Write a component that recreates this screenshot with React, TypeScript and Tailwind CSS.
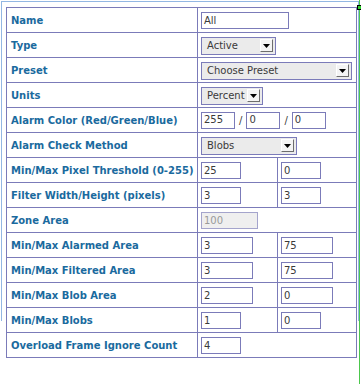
import type { ReactNode } from "react";

/* zone settings form — fixed-width table, old-school inputs */

const font = "font-['DejaVu_Sans',Verdana,sans-serif]";

function Box({ value, w, disabled }: { value: string; w: string; disabled?: boolean }) {
  return (
    <span
      className={`inline-flex items-center h-[17px] px-[2px] border align-middle text-[10px] leading-none ${w} ${
        disabled
          ? "border-[#a4a4cc] bg-[#efefef] text-[#9a9a9a]"
          : "border-[#7b7bb9] bg-white text-[#3a3a3a]"
      }`}
    >
      {value}
    </span>
  );
}

function Select({ value, w }: { value: string; w: string }) {
  return (
    <span
      className={`inline-flex items-center justify-between h-[18px] pl-[5px] pr-[2px] border border-[#7b7bb9] bg-[#ebebeb] align-middle text-[10px] leading-none text-[#3a3a3a] ${w}`}
    >
      <span>{value}</span>
      <span className="flex items-center justify-center w-[13px] h-[13px] bg-[#f4f4f4] border-r border-b border-[#6d6d6d] border-l border-t border-l-white border-t-white">
        <svg width="7" height="4" viewBox="0 0 7 4">
          <path d="M0 0h7L3.5 4z" fill="#000" />
        </svg>
      </span>
    </span>
  );
}

function Row({ label, children }: { label: string; children: ReactNode }) {
  return (
    <tr>
      <td className="h-[25px] border border-[#7b7bb9] px-[4px] py-0 text-[10px] font-bold text-[#1a6a9e] whitespace-nowrap">
        {label}
      </td>
      {children}
    </tr>
  );
}

const cell = "h-[25px] border border-[#7b7bb9] px-[3px] py-0";

export default function App() {
  return (
    <div className={`relative w-[361px] h-[384px] bg-white overflow-hidden ${font}`}>
      <div className="absolute right-[1px] top-0 bottom-0 w-px bg-[#4cc74c]" />
      <div className="absolute right-[0px] top-[6px] w-[3px] h-[3px] bg-[#2fd02f] outline outline-1 outline-black" />
      <div className="ml-[1px] mt-[1px] w-[358px] h-[320px] border-l border-t border-r border-[#93b7e3] pl-[4px] pt-[5px]">
        <table className="w-[350px] table-fixed">
          <colgroup>
            <col className="w-[191px]" />
            <col className="w-[80px]" />
            <col className="w-[79px]" />
          </colgroup>
          <tbody>
            <Row label="Name">
              <td colSpan={2} className={cell}>
                <Box value="All" w="w-[88px]" />
              </td>
            </Row>
            <Row label="Type">
              <td colSpan={2} className={cell}>
                <Select value="Active" w="w-[75px]" />
              </td>
            </Row>
            <Row label="Preset">
              <td colSpan={2} className={cell}>
                <Select value="Choose Preset" w="w-[151px]" />
              </td>
            </Row>
            <Row label="Units">
              <td colSpan={2} className={cell}>
                <Select value="Percent" w="w-[62px]" />
              </td>
            </Row>
            <Row label="Alarm Color (Red/Green/Blue)">
              <td colSpan={2} className={`${cell} text-[10px] text-[#3a3a3a]`}>
                <Box value="255" w="w-[34px]" />
                <span className="mx-[4px] align-middle">/</span>
                <Box value="0" w="w-[34px]" />
                <span className="mx-[4px] align-middle">/</span>
                <Box value="0" w="w-[34px]" />
              </td>
            </Row>
            <Row label="Alarm Check Method">
              <td colSpan={2} className={cell}>
                <Select value="Blobs" w="w-[96px]" />
              </td>
            </Row>
            <Row label="Min/Max Pixel Threshold (0-255)">
              <td className={cell}><Box value="25" w="w-[40px]" /></td>
              <td className={cell}><Box value="0" w="w-[40px]" /></td>
            </Row>
            <Row label="Filter Width/Height (pixels)">
              <td className={cell}><Box value="3" w="w-[40px]" /></td>
              <td className={cell}><Box value="3" w="w-[40px]" /></td>
            </Row>
            <Row label="Zone Area">
              <td colSpan={2} className={cell}>
                <Box value="100" w="w-[57px]" disabled />
              </td>
            </Row>
            <Row label="Min/Max Alarmed Area">
              <td className={cell}><Box value="3" w="w-[52px]" /></td>
              <td className={cell}><Box value="75" w="w-[52px]" /></td>
            </Row>
            <Row label="Min/Max Filtered Area">
              <td className={cell}><Box value="3" w="w-[52px]" /></td>
              <td className={cell}><Box value="75" w="w-[52px]" /></td>
            </Row>
            <Row label="Min/Max Blob Area">
              <td className={cell}><Box value="2" w="w-[52px]" /></td>
              <td className={cell}><Box value="0" w="w-[52px]" /></td>
            </Row>
            <Row label="Min/Max Blobs">
              <td className={cell}><Box value="1" w="w-[40px]" /></td>
              <td className={cell}><Box value="0" w="w-[40px]" /></td>
            </Row>
            <Row label="Overload Frame Ignore Count">
              <td colSpan={2} className={cell}>
                <Box value="4" w="w-[40px]" />
              </td>
            </Row>
          </tbody>
        </table>
      </div>
    </div>
  );
}
